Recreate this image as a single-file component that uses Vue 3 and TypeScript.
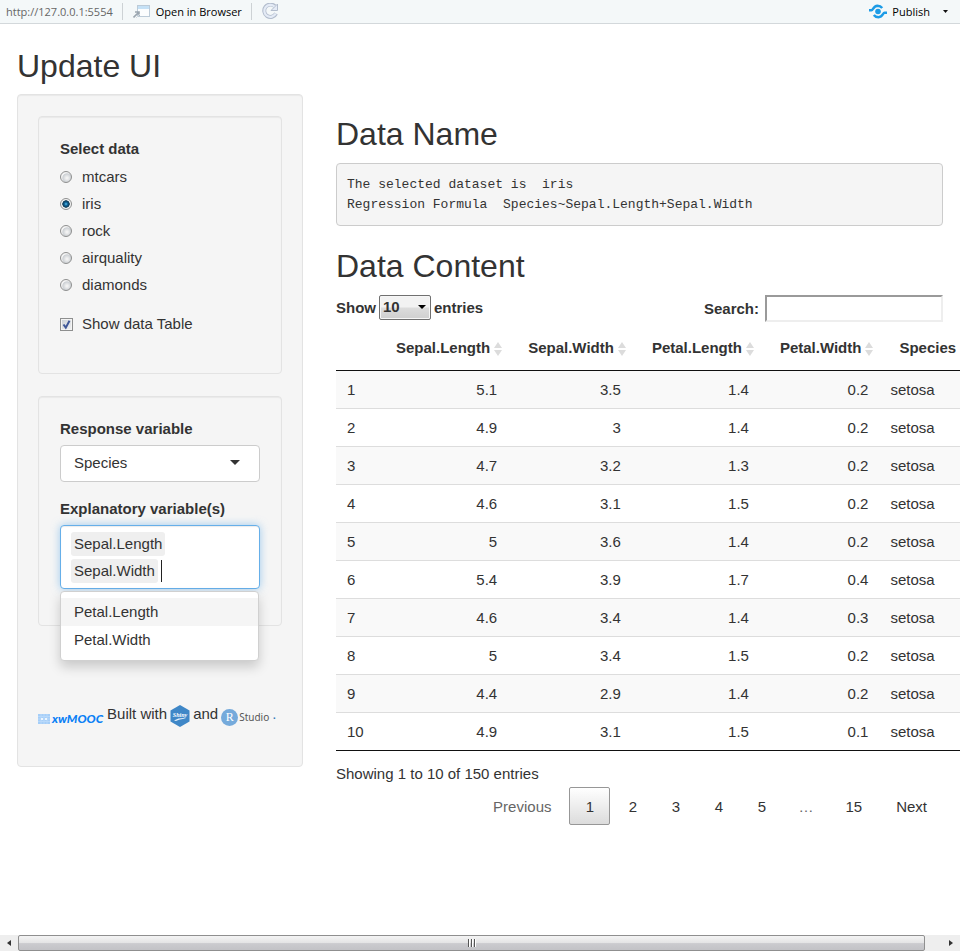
<script setup lang="ts">
import { computed, ref } from 'vue'

interface FlowerRow {
  id: number
  sepalLength: number
  sepalWidth: number
  petalLength: number
  petalWidth: number
  species: string
}

const datasets = ['mtcars', 'iris', 'rock', 'airquality', 'diamonds']
const selected = ref('iris')
const showTable = ref(true)
const response = ref('Species')
const responseOptions = ['Species', 'Sepal.Length', 'Sepal.Width', 'Petal.Length', 'Petal.Width']
const explanatory = ref(['Sepal.Length', 'Sepal.Width'])
const remaining = ref(['Petal.Length', 'Petal.Width'])
const pageSize = ref(10)
const search = ref('')
const term = ref('')
const currentPage = ref('1')
const pages = ['1', '2', '3', '4', '5', '…', '15']

const columns = ['Sepal.Length', 'Sepal.Width', 'Petal.Length', 'Petal.Width', 'Species']

const values: [number, number, number, number][] = [
  [5.1, 3.5, 1.4, 0.2],
  [4.9, 3, 1.4, 0.2],
  [4.7, 3.2, 1.3, 0.2],
  [4.6, 3.1, 1.5, 0.2],
  [5, 3.6, 1.4, 0.2],
  [5.4, 3.9, 1.7, 0.4],
  [4.6, 3.4, 1.4, 0.3],
  [5, 3.4, 1.5, 0.2],
  [4.4, 2.9, 1.4, 0.2],
  [4.9, 3.1, 1.5, 0.1],
]

const rows: FlowerRow[] = values.map(([sepalLength, sepalWidth, petalLength, petalWidth], i) => ({
  id: i + 1,
  sepalLength,
  sepalWidth,
  petalLength,
  petalWidth,
  species: 'setosa',
}))

const summary = computed(
  () =>
    `The selected dataset is  ${selected.value}\nRegression Formula  ${response.value}~${explanatory.value.join('+')}`,
)

function addVariable(name: string) {
  explanatory.value.push(name)
  remaining.value = remaining.value.filter((v) => v !== name)
}
</script>

<template>
  <div class="viewer">
    <header class="toolbar">
      <span class="url">http://127.0.0.1:5554</span>
      <span class="divider"></span>
      <button class="tool open" type="button">
        <svg width="17" height="15" viewBox="0 0 17 15" aria-hidden="true">
          <rect x="4.500" y="1.500" width="12" height="11" fill="#fbfdfe" stroke="#bccbd8" />
          <rect x="5" y="2" width="11" height="3" fill="#c5e1f6" />
          <path d="M0.500 13.500 L5.500 8.500 M2 8 H6 V12" fill="none" stroke="#9aa5af" stroke-width="1.600" />
          <path d="M3 14 L7 10" stroke="#d4dbe0" />
        </svg>
        Open in Browser
      </button>
      <span class="divider"></span>
      <button class="tool" type="button" aria-label="Refresh">
        <svg width="17" height="17" viewBox="0 0 17 17" aria-hidden="true">
          <path
            d="M12.800 3.300 A6.200 6.200 0 1 0 14 10.500"
            fill="none"
            stroke="#b3bdcd"
            stroke-width="4"
          />
          <path d="M9 7.500 H15.500 V1 Z" fill="#e4ebf6" stroke="#b3bdcd" />
          <path
            d="M12.500 3.500 A6 6 0 1 0 13.700 10.500"
            fill="none"
            stroke="#e4ebf6"
            stroke-width="2.200"
          />
        </svg>
      </button>
      <button class="tool publish" type="button">
        <svg width="18" height="15" viewBox="0 0 18 15" aria-hidden="true">
          <circle cx="9" cy="7.500" r="2.800" fill="#1c9be6" />
          <path
            d="M0 6.200 H2.500 C4.200 6.200 4 2 8.500 1.700 Q11.500 1.700 13.200 4 M18 8.800 H15.500 C13.800 8.800 14 13 9.500 13.300 Q6.500 13.300 4.800 11"
            fill="none"
            stroke="#1c9be6"
            stroke-width="2.400"
          />
        </svg>
        Publish
        <svg class="caret" width="5" height="3" viewBox="0 0 5 3" aria-hidden="true">
          <path d="M0 0 H5 L2.500 3 Z" fill="#111" />
        </svg>
      </button>
    </header>

    <main class="page">
      <h2 class="title">Update UI</h2>
      <div class="layout">
        <form class="well sidebar" @submit.prevent>
          <fieldset class="well">
            <span class="group-label">Select data</span>
            <div class="radios" role="radiogroup" aria-label="Select data">
              <label v-for="name in datasets" :key="name" class="choice">
                <input v-model="selected" type="radio" name="dataset" :value="name" />
                {{ name }}
              </label>
            </div>
            <label class="choice check">
              <input v-model="showTable" type="checkbox" />
              <svg v-if="showTable" class="tick" width="13" height="13" viewBox="0 0 13 13" aria-hidden="true">
                <path d="M3.500 6.500 L5.800 9.700 L9.500 2.800" fill="none" stroke="#3f5798" stroke-width="2" />
              </svg>
              Show data Table
            </label>
          </fieldset>

          <fieldset class="well variables">
            <label class="group-label" for="response">Response variable</label>
            <div class="select-wrap">
              <select id="response" v-model="response">
                <option v-for="name in responseOptions" :key="name">{{ name }}</option>
              </select>
            </div>
            <label class="group-label" for="explanatory">Explanatory variable(s)</label>
            <div class="multi">
              <div class="tags">
                <span v-for="name in explanatory" :key="name" class="tag">{{ name }}</span>
                <input id="explanatory" v-model="term" class="entry" type="text" />
              </div>
              <div v-if="remaining.length" class="menu">
                <button
                  v-for="(name, i) in remaining"
                  :key="name"
                  type="button"
                  :class="{ active: i === 0 }"
                  @click="addVariable(name)"
                >
                  {{ name }}
                </button>
              </div>
            </div>
          </fieldset>

          <div class="credits">
            <a class="mooc" href="#">
              <svg width="12" height="10" viewBox="0 0 12 10" aria-hidden="true">
                <rect width="12" height="10" fill="#a5cef8" />
                <path d="M0 2.500 H12 M0 5 H12 M0 7.500 H12 M3 0 V10 M6 0 V10 M9 0 V10" stroke="#b9d9fa" />
                <path d="M3 4 H5 V6 H3 Z M7 4 H9 V6 H7 Z" fill="#eef6fe" />
              </svg>
              <span>xwMOOC</span>
            </a>
            <span>Built with</span>
            <a class="hex" href="#" aria-label="Shiny">
              <svg width="20" height="22" viewBox="0 0 20 22" aria-hidden="true">
                <path d="M10 0 L19.500 5.500 V16.500 L10 22 L0.500 16.500 V5.500 Z" fill="#3f87c7" />
                <path d="M4 15.500 Q9 12.500 16 13.200 Q9 14.500 6 16 Z" fill="#e3effa" />
                <text x="10" y="11.500" text-anchor="middle">Shiny</text>
              </svg>
            </a>
            <span>and</span>
            <a class="studio" href="#"><span class="ball">R</span>Studio</a>
            <span class="dot">.</span>
          </div>
        </form>

        <section class="content">
          <h2>Data Name</h2>
          <pre>{{ summary }}</pre>
          <h2>Data Content</h2>
          <template v-if="showTable">
            <div class="controls">
              <label class="length">
                Show
                <span class="length-wrap">
                  <select v-model="pageSize">
                    <option :value="10">10</option>
                    <option :value="25">25</option>
                    <option :value="50">50</option>
                  </select>
                </span>
                entries
              </label>
              <label class="search">Search: <input v-model="search" type="search" /></label>
            </div>
            <table>
              <thead>
                <tr>
                  <th class="index"></th>
                  <th v-for="name in columns" :key="name" :class="{ text: name === 'Species' }">
                    {{ name }}
                    <svg width="10" height="14" viewBox="0 0 10 14" aria-hidden="true">
                      <path d="M5 0 L9 6 H1 Z M5 14 L9 8 H1 Z" fill="#dcdcdc" />
                    </svg>
                  </th>
                </tr>
              </thead>
              <tbody>
                <tr v-for="row in rows" :key="row.id">
                  <td class="text">{{ row.id }}</td>
                  <td>{{ row.sepalLength }}</td>
                  <td>{{ row.sepalWidth }}</td>
                  <td>{{ row.petalLength }}</td>
                  <td>{{ row.petalWidth }}</td>
                  <td class="text">{{ row.species }}</td>
                </tr>
              </tbody>
            </table>
            <p class="info">Showing 1 to 10 of 150 entries</p>
            <nav class="pager" aria-label="Table pages">
              <button class="previous" type="button" disabled>Previous</button>
              <template v-for="page in pages" :key="page">
                <span v-if="page === '…'" class="gap">…</span>
                <button
                  v-else
                  type="button"
                  :class="{ current: page === currentPage }"
                  @click="currentPage = page"
                >
                  {{ page }}
                </button>
              </template>
              <button type="button">Next</button>
            </nav>
          </template>
        </section>
      </div>
    </main>

    <div class="scrollbar">
      <button type="button" aria-label="Scroll left">
        <svg width="4" height="6" viewBox="0 0 4 6"><path d="M4 0 V6 L0 3 Z" fill="#333" /></svg>
      </button>
      <div class="thumb"><i></i><i></i><i></i></div>
      <button class="right" type="button" aria-label="Scroll right">
        <svg width="4" height="6" viewBox="0 0 4 6"><path d="M0 0 V6 L4 3 Z" fill="#333" /></svg>
      </button>
    </div>
  </div>
</template>

<style>
body {
  margin: 0;
  background: #fff;
}
</style>

<style scoped>
* {
  box-sizing: border-box;
}

.viewer {
  display: flex;
  flex-direction: column;
  min-height: 100vh;
  overflow: hidden;
  color: #333;
  font: 15px/22px 'Liberation Sans', Arial, sans-serif;
}

button,
input,
select {
  margin: 0;
  font: inherit;
  color: inherit;
}

button {
  padding: 0;
  border: 0;
  background: none;
}

h2 {
  margin: 0;
  font-size: 32px;
  font-weight: 400;
  line-height: 36px;
}

/* Toolbar */
.toolbar {
  display: flex;
  align-items: center;
  height: 24px;
  padding: 0 12px 0 6px;
  border-bottom: 1px solid #d3d8db;
  background: #f4f8f9;
  font: 11px/16px 'Open Sans', 'Noto Sans', sans-serif;
}

.url {
  color: #666;
}

.divider {
  width: 1px;
  height: 17px;
  margin: 0 10px 0 9px;
  background: #cdd2d5;
}

.tool {
  display: flex;
  align-items: center;
  gap: 6px;
  color: #000;
}

.publish {
  gap: 5px;
  margin-left: auto;
}

.caret {
  margin-left: 8px;
}

/* Page grid */
.page {
  flex: 1;
  padding-top: 24px;
}

.title {
  padding: 0 17px;
}

.layout {
  display: grid;
  grid-template-columns: minmax(0, 1fr) minmax(0, 2fr);
  align-items: start;
  margin-top: 10px;
}

.well {
  min-width: 0;
  margin: 0 0 22px;
  padding: 21px;
  border: 1px solid #e3e3e3;
  border-radius: 4px;
  background: #f5f5f5;
  box-shadow: inset 0 1px 1px rgba(0, 0, 0, 0.05);
}

.sidebar {
  margin: 0 17px;
  padding: 21px 20px 39px;
}

.group-label {
  display: block;
  font-weight: 700;
}

.radios {
  margin: 3px 0 15px;
}

.choice {
  display: flex;
  align-items: center;
  gap: 10px;
  height: 27px;
}

.choice input {
  appearance: none;
  width: 12px;
  height: 12px;
  border: 1px solid #8e8f8f;
  border-radius: 50%;
  background: radial-gradient(circle at 60% 60%, #f2f2f2 10%, #ccd0d4 50%, #f4f4f4 60%);
}

.choice input:checked {
  background: radial-gradient(circle at 50% 50%, #5cc6f0 0, #15689c 22%, #0b3650 48%, #f4f4f4 56%);
}

.check {
  position: relative;
  gap: 9px;
  height: 22px;
  margin-bottom: 17px;
}

.choice input[type='checkbox'] {
  width: 13px;
  height: 13px;
  border-radius: 0;
  background: linear-gradient(135deg, #c9cfd6, #f3f3f3);
  box-shadow: inset 0 0 0 1px #f4f4f4;
}

.tick {
  position: absolute;
  left: 0;
}

.select-wrap {
  position: relative;
  margin: 5px 0 16px;
}

.select-wrap::after {
  content: '';
  position: absolute;
  top: 15px;
  right: 20px;
  border: 5px solid transparent;
  border-top-color: #333;
  border-bottom: 0;
  pointer-events: none;
}

.select-wrap select {
  display: block;
  appearance: none;
  width: 100%;
  height: 37px;
  padding: 0 13px 2px;
  border: 1px solid #ccc;
  border-radius: 4px;
  background: #fff;
}

.multi {
  position: relative;
  margin: 5px 0 15px;
}

.tags {
  display: flex;
  flex-wrap: wrap;
  gap: 3px;
  padding: 6px 50px 5px 10px;
  border: 1px solid #66afe9;
  border-radius: 4px;
  background: #fff;
  box-shadow:
    inset 0 1px 1px rgba(0, 0, 0, 0.08),
    0 0 8px rgba(102, 175, 233, 0.6);
}

.tag {
  padding: 1px 3px;
  border-radius: 3px;
  background: #efefef;
}

.entry {
  width: 4px;
  height: 22px;
  margin-top: 1px;
  padding: 0;
  border: 0;
  border-left: 1px solid #222;
  background: none;
  outline: 0;
}

.menu {
  position: absolute;
  top: 66px;
  left: 0;
  right: 1px;
  padding: 6px 0;
  border: 1px solid #d0d0d0;
  border-radius: 4px;
  background: #fff;
  box-shadow: 0 6px 12px rgba(0, 0, 0, 0.18);
}

.menu button {
  display: block;
  width: 100%;
  padding: 3px 13px;
  text-align: left;
}

.menu .active {
  background: #f5f5f5;
}

/* Credits */
.credits {
  display: flex;
  align-items: center;
  gap: 3px;
  margin-top: 74px;
  white-space: nowrap;
}

.credits a {
  color: inherit;
  text-decoration: none;
}

.mooc {
  display: flex;
  align-items: center;
  gap: 2px;
  padding: 10px 1px 0 0;
}

.mooc span {
  color: #0a80f5;
  font: italic 900 12px/14px Lato, sans-serif;
}

.hex {
  display: flex;
  padding-top: 5px;
}

.hex text {
  fill: #fff;
  font: italic 700 6px 'Liberation Serif', serif;
}

.credits .studio {
  display: flex;
  align-items: center;
  gap: 1px;
  padding-top: 7px;
  color: #555;
  font: 10px/18px 'Noto Sans', sans-serif;
}

.ball {
  width: 17px;
  height: 17px;
  border-radius: 50%;
  background: #75aadb;
  color: #fff;
  font: 12px/17px 'Liberation Serif', serif;
  text-align: center;
}

.dot {
  color: #337ab7;
}

/* Data panel */
.content {
  padding: 22px 17px 0 16px;
}

pre {
  margin: 11px 0 22px;
  padding: 11px 10px 10px;
  border: 1px solid #ccc;
  border-radius: 4px;
  background: #f5f5f5;
  font: 13px/20px 'Liberation Mono', 'Courier New', monospace;
}

.controls {
  display: flex;
  justify-content: space-between;
  margin-top: 11px;
  font-weight: 700;
}

.controls label {
  display: flex;
  align-items: center;
}

.length {
  gap: 3px;
  height: 25px;
}

.length-wrap {
  position: relative;
}

.length-wrap::after {
  content: '';
  position: absolute;
  top: 10px;
  right: 5px;
  border: 4px solid transparent;
  border-top-color: #000;
  border-bottom: 0;
  pointer-events: none;
}

.length select {
  display: block;
  appearance: none;
  width: 52px;
  height: 25px;
  padding: 0 3px 1px;
  border: 1px solid #707070;
  border-radius: 2px;
  background: linear-gradient(#f2f2f2 48%, #dcdcdc 52%, #cfcfcf);
  box-shadow: inset 0 0 0 1px #f6f6f6;
}

.search {
  gap: 6px;
}

.search input {
  appearance: none;
  width: 178px;
  height: 27px;
  border: 2px solid;
  border-color: #9a9a9a #eee #eee #9a9a9a;
  background: #fff;
}

table {
  margin-top: 5px;
  border-collapse: separate;
  border-spacing: 0;
  border-bottom: 1px solid #111;
  line-height: 21px;
  white-space: nowrap;
}

th {
  position: relative;
  padding: 10px 18px 12px 20px;
  border-bottom: 1px solid #111;
  text-align: right;
}

.index {
  padding-right: 20px;
}

th svg {
  position: absolute;
  top: 15px;
  right: 5px;
}

td {
  padding: 8px 11px;
  border-top: 1px solid #ddd;
  text-align: right;
}

.text {
  text-align: left;
}

tbody tr:first-child td {
  border-top: 0;
}

tbody tr:nth-child(odd) {
  background: #f9f9f9;
}

.info {
  margin: 12px 0 2px;
}

.pager {
  display: flex;
  justify-content: flex-end;
  gap: 2px;
}

.pager button,
.gap {
  min-width: 41px;
  height: 38px;
  padding: 1px 15px 0;
  border: 1px solid transparent;
  border-radius: 2px;
  line-height: 36px;
  text-align: center;
}

.pager .previous {
  color: #666;
}

.pager .current {
  border-color: #979797;
  background: linear-gradient(#fff, #dcdcdc);
}

.pager .gap {
  padding: 1px 13px 0;
  color: #666;
}

/* Horizontal scrollbar */
.scrollbar {
  display: flex;
  height: 16px;
  background: #eee;
}

.scrollbar button {
  display: flex;
  align-items: center;
  justify-content: center;
  width: 18px;
}

.scrollbar .right {
  margin-left: 17px;
}

.thumb {
  display: flex;
  flex: 1;
  align-items: center;
  justify-content: center;
  gap: 1px;
  border: 1px solid #8f8f8f;
  border-radius: 2px;
  background: linear-gradient(#f4f4f4, #e4e4e5 48%, #cbcbcf 54%, #c2c2c6);
}

.thumb i {
  width: 2px;
  height: 8px;
  border-left: 1px solid #555;
  background: #fff;
}
</style>
